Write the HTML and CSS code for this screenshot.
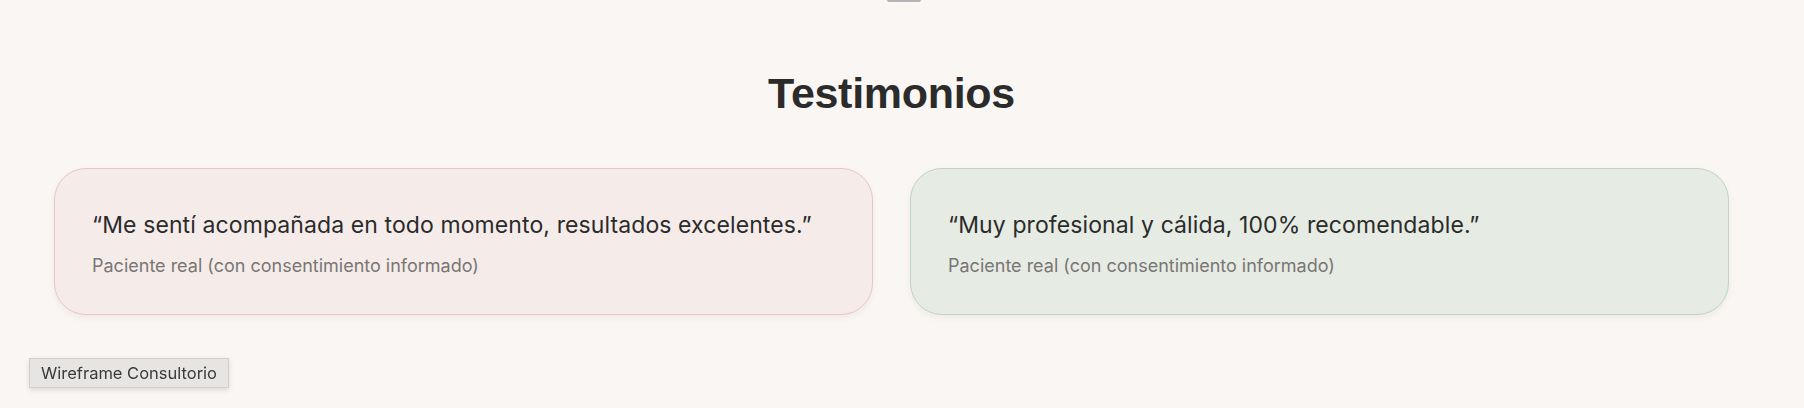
FILE: index.html
```html
<html>
  <head>
    <meta charset="UTF-8">
    <meta name="viewport" content="width=device-width,initial-scale=1">
    <title>Testimonios</title>
    <link rel="stylesheet" href="styles.css">
  </head>
  <body>
    <div class="top-tab"></div>
    <section class="testimonios">
      <h2 class="section-title">Testimonios</h2>
      <div class="cards">
        <div class="card card-rose">
          <p class="quote">“Me sentí acompañada en todo momento, resultados excelentes.”</p>
          <p class="author">Paciente real (con consentimiento informado)</p>
        </div>
        <div class="card card-sage">
          <p class="quote">“Muy profesional y cálida, 100% recomendable.”</p>
          <p class="author">Paciente real (con consentimiento informado)</p>
        </div>
      </div>
    </section>
    <div class="wf-label">Wireframe Consultorio</div>
  </body>
</html>
```
FILE: styles.css
```css
body {
  margin: 0;
  background-color: #faf6f3;
  font-family: Inter, "Liberation Sans", Arial, sans-serif;
  color: #2b2b2b;
}
.top-tab {
  position: absolute;
  top: 0;
  left: 887px;
  width: 34px;
  height: 2px;
  background-color: #b3b3b8;
  border-radius: 0 0 3px 3px;
}
.testimonios {
  padding: 67px 75px 0 54px;
}
.section-title {
  margin: 0 0 49px 0;
  text-align: center;
  font-family: "Liberation Sans", Arial, sans-serif;
  font-size: 43px;
  line-height: 52px;
  font-weight: bold;
  letter-spacing: -0.3px;
  color: #2b2b2b;
}
.cards {
  display: grid;
  grid-template-columns: 1fr 1fr;
  gap: 37px;
}
.card {
  border-radius: 32px;
  padding: 41px 37px 36px 37px;
  box-shadow: 0 3px 6px rgba(120, 100, 90, 0.08);
}
.card-rose {
  background-color: #f5ecea;
  border: 1px solid #eac6c2;
}
.card-sage {
  background-color: #e6ebe4;
  border: 1px solid #bfd3c6;
}
.quote {
  margin: 0 0 14px 0;
  font-size: 23px;
  line-height: 30px;
  letter-spacing: 0.1px;
  color: #2b2b2b;
}
.author {
  margin: 0;
  font-size: 18px;
  line-height: 24px;
  color: #7a7674;
}
.wf-label {
  position: fixed;
  left: 29px;
  bottom: 20px;
  width: 200px;
  height: 30px;
  box-sizing: border-box;
  border: 1px solid #d2d0ce;
  background-color: #e7e5e3;
  box-shadow: 0 2px 5px rgba(0, 0, 0, 0.12);
  font-size: 16.5px;
  line-height: 28px;
  text-align: center;
  color: #3a3a3a;
}
```
